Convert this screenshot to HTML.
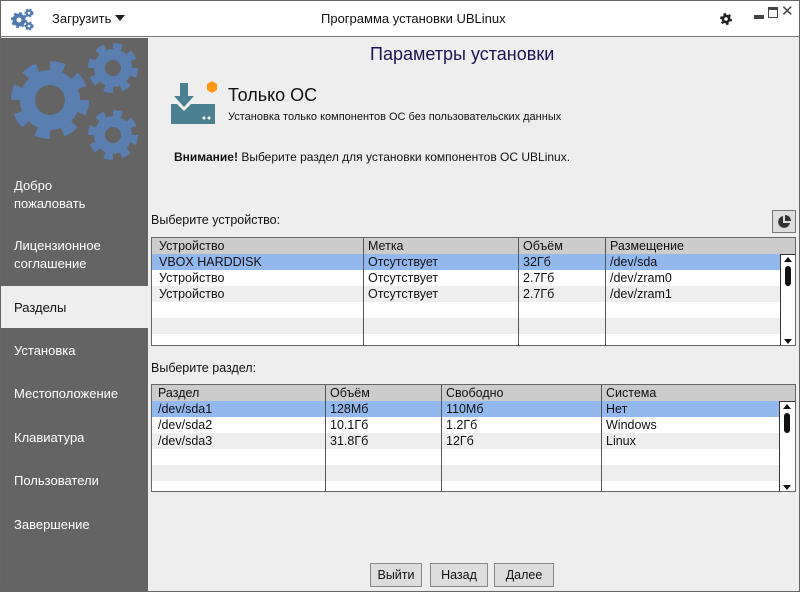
<!DOCTYPE html>
<html><head><meta charset="utf-8"><style>
*{margin:0;padding:0;box-sizing:border-box}
body{width:800px;height:592px;position:relative;background:#eeeeee;font-family:"Liberation Sans","DejaVu Sans",sans-serif;font-size:12px;color:#111;overflow:hidden}
.a{position:absolute;white-space:nowrap}
#frame{position:absolute;left:0;top:0;width:800px;height:592px;border:1px solid #666}
#hdr{position:absolute;left:1px;top:1px;width:798px;height:36px;background:#fff;border-bottom:1px solid #777}
#side{position:absolute;left:1px;top:38px;width:147px;height:553px;background:#646464}
.si{position:absolute;left:13px;color:#fff;font-size:13px;line-height:18px}
.tbl{position:absolute;left:151px;width:645px;border:1px solid #666;background:#fff;overflow:hidden}
.row{position:absolute;left:0;width:100%;height:16px;font-size:12.5px;line-height:16px}
.col{position:absolute;top:0;bottom:0;border-left:1px solid #555}
.btn{position:absolute;top:563px;height:24px;border:1px solid #888;background:#ddd;font-size:12.5px;line-height:22px;text-align:center}
</style></head><body>
<div id="frame"></div>
<div id="hdr">
<svg class="a" style="left:8px;top:6px" width="26" height="24" viewBox="0 0 26 24">
<g fill="#4f7ab0">
<circle cx="10" cy="13" r="6.5" stroke="#4f7ab0" stroke-width="3" stroke-dasharray="2.6 2.5" fill="#4f7ab0"/><circle cx="10" cy="13" r="2.5" fill="#fff"/>
<circle cx="20" cy="6" r="3.5" stroke="#4f7ab0" stroke-width="2" stroke-dasharray="1.8 1.6"/><circle cx="20" cy="6" r="1.3" fill="#fff"/>
<circle cx="20" cy="19" r="3.5" stroke="#4f7ab0" stroke-width="2" stroke-dasharray="1.8 1.6"/><circle cx="20" cy="19" r="1.3" fill="#fff"/>
</g></svg>
<div class="a" style="left:51px;top:10px;font-size:13px">Загрузить</div>
<svg class="a" style="left:114px;top:14px" width="10" height="6"><path d="M0 0H10L5 6Z" fill="#222"/></svg>
<div class="a" style="left:320px;top:10px;font-size:13px">Программа установки UBLinux</div>
<svg class="a" style="left:718px;top:11px" width="14" height="14" viewBox="0 0 14 14"><circle cx="7" cy="7" r="4.5" fill="#222" stroke="#222" stroke-width="3" stroke-dasharray="2.2 2.5"/><circle cx="7" cy="7" r="1.8" fill="#fff"/></svg>
<div class="a" style="left:753px;top:14px;width:10px;height:4px;background:#444"></div>
<div class="a" style="left:767px;top:6px;width:10px;height:11px;border:1.5px solid #444;border-top-width:3px"></div>
<div class="a" style="left:780px;top:1px;font-size:15px;color:#444">✕</div>
</div>
<div id="side">
<svg class="a" style="left:0;top:0" width="147" height="125" viewBox="0 0 147 125">
<g fill="#5a7eaf" stroke="#5a7eaf">
<circle cx="49" cy="62" r="30" stroke="none"/>
<circle cx="49" cy="62" r="33" fill="none" stroke-width="12" stroke-dasharray="13.5 12.4"/>
<circle cx="112" cy="30" r="19" stroke="none"/>
<circle cx="112" cy="30" r="21" fill="none" stroke-width="8" stroke-dasharray="8.5 7.98"/>
<circle cx="112" cy="97" r="19" stroke="none"/>
<circle cx="112" cy="97" r="21" fill="none" stroke-width="8" stroke-dasharray="8.5 7.98"/>
</g>
<circle cx="49" cy="62" r="15" fill="#646464"/>
<circle cx="112" cy="30" r="8" fill="#646464"/>
<circle cx="112" cy="97" r="8" fill="#646464"/>
</svg>
<div class="si" style="top:139px">Добро<br>пожаловать</div>
<div class="si" style="top:199px">Лицензионное<br>соглашение</div>
<div class="a" style="left:0;top:248px;width:147px;height:42px;background:#eeeeee"></div>
<div class="si" style="top:261px;color:#111">Разделы</div>
<div class="si" style="top:304px">Установка</div>
<div class="si" style="top:347px">Местоположение</div>
<div class="si" style="top:391px">Клавиатура</div>
<div class="si" style="top:434px">Пользователи</div>
<div class="si" style="top:478px">Завершение</div>
</div>
<div class="a" style="left:370px;top:44px;font-size:18px;color:#1e1550">Параметры установки</div>
<svg class="a" style="left:170px;top:80px" width="50" height="46" viewBox="0 0 50 46">
<path d="M10 3H18V16H24L14 27L4 16H10Z" fill="#4a8090"/>
<path d="M1 24H7L14 31L21 24H45V44H1Z" fill="#4a8090"/>
<circle cx="34" cy="38" r="1.5" fill="#fff"/><circle cx="39" cy="38" r="1.5" fill="#fff"/>
<path d="M42 1L47 4V10L42 13L37 10V4Z" fill="#ff9911"/>
</svg>
<div class="a" style="left:228px;top:85px;font-size:18px">Только ОС</div>
<div class="a" style="left:228px;top:111px;font-size:11px">Установка только компонентов ОС без пользовательских данных</div>
<div class="a" style="left:174px;top:150px;font-size:12px"><b>Внимание!</b> Выберите раздел для установки компонентов ОС UBLinux.</div>
<div class="a" style="left:151px;top:213px;font-size:12.5px">Выберите устройство:</div>
<div class="a" style="left:772px;top:210px;width:24px;height:23px;border:1px solid #777;background:#ddd"></div>
<svg class="a" style="left:776px;top:214px" width="16" height="16" viewBox="0 0 16 16"><path d="M7 2A6 6 0 1 0 14 9H7Z" fill="#333"/><path d="M9 1A6 6 0 0 1 15 7H9Z" fill="#333"/></svg>
<div class="tbl" style="top:237px;height:109px">
<div class="row" style="top:0;background:#ccc"><span class="a" style="left:7px">Устройство</span><span class="a" style="left:216px">Метка</span><span class="a" style="left:371px">Объём</span><span class="a" style="left:458px">Размещение</span></div>
<div class="row" style="top:16px;background:#93b8ee"><span class="a" style="left:7px">VBOX HARDDISK</span><span class="a" style="left:216px">Отсутствует</span><span class="a" style="left:371px">32Гб</span><span class="a" style="left:458px">/dev/sda</span></div>
<div class="row" style="top:32px"><span class="a" style="left:7px">Устройство</span><span class="a" style="left:216px">Отсутствует</span><span class="a" style="left:371px">2.7Гб</span><span class="a" style="left:458px">/dev/zram0</span></div>
<div class="row" style="top:48px;background:#eee"><span class="a" style="left:7px">Устройство</span><span class="a" style="left:216px">Отсутствует</span><span class="a" style="left:371px">2.7Гб</span><span class="a" style="left:458px">/dev/zram1</span></div>
<div class="row" style="top:80px;background:#eee"></div>
<div class="col" style="left:211px"></div><div class="col" style="left:366px"></div><div class="col" style="left:453px"></div>
<div class="a" style="left:628px;top:16px;width:16px;height:92px;background:#fff;border-left:1px solid #333;border-top:1px solid #333"></div>
<svg class="a" style="left:631px;top:19px" width="10" height="88"><path d="M1 5H9L5 0Z" fill="#111"/><rect x="2" y="9" width="6" height="20" rx="3" fill="#111"/><path d="M1 82H9L5 87Z" fill="#111"/></svg>
</div>
<div class="a" style="left:151px;top:361px;font-size:12.5px">Выберите раздел:</div>
<div class="tbl" style="top:384px;height:108px">
<div class="row" style="top:0;background:#ccc"><span class="a" style="left:6px">Раздел</span><span class="a" style="left:178px">Объём</span><span class="a" style="left:294px">Свободно</span><span class="a" style="left:454px">Система</span></div>
<div class="row" style="top:16px;background:#93b8ee"><span class="a" style="left:6px">/dev/sda1</span><span class="a" style="left:178px">128Мб</span><span class="a" style="left:294px">110Мб</span><span class="a" style="left:454px">Нет</span></div>
<div class="row" style="top:32px"><span class="a" style="left:6px">/dev/sda2</span><span class="a" style="left:178px">10.1Гб</span><span class="a" style="left:294px">1.2Гб</span><span class="a" style="left:454px">Windows</span></div>
<div class="row" style="top:48px;background:#eee"><span class="a" style="left:6px">/dev/sda3</span><span class="a" style="left:178px">31.8Гб</span><span class="a" style="left:294px">12Гб</span><span class="a" style="left:454px">Linux</span></div>
<div class="row" style="top:80px;background:#eee"></div>
<div class="col" style="left:173px"></div><div class="col" style="left:289px"></div><div class="col" style="left:449px"></div>
<div class="a" style="left:627px;top:16px;width:17px;height:91px;background:#fff;border-left:1px solid #333;border-top:1px solid #333"></div>
<svg class="a" style="left:630px;top:19px" width="10" height="88"><path d="M1 5H9L5 0Z" fill="#111"/><rect x="2" y="9" width="6" height="20" rx="3" fill="#111"/><path d="M1 81H9L5 86Z" fill="#111"/></svg>
</div>
<div class="btn" style="left:370px;width:52px">Выйти</div>
<div class="btn" style="left:430px;width:58px">Назад</div>
<div class="btn" style="left:494px;width:60px">Далее</div>
</body></html>
